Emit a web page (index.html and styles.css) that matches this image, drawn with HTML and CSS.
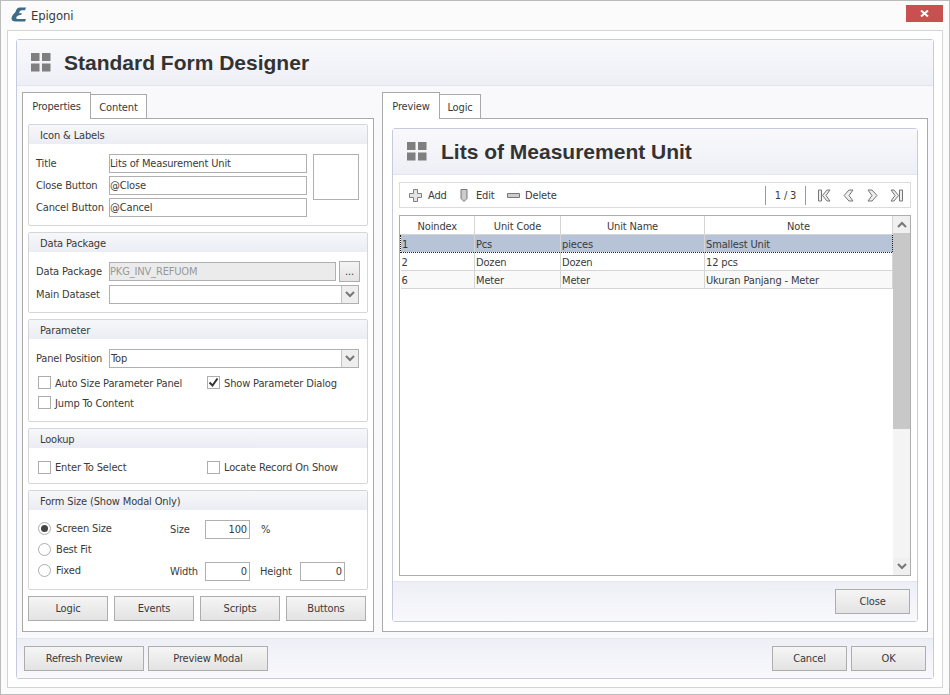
FILE: index.html
```html
<!DOCTYPE html>
<html lang="en">
<head>
  <meta charset="UTF-8">
  <title>Epigoni</title>
  <link rel="stylesheet" href="styles.css">
</head>
<body>
  <div class="window">
    <div class="titlebar">
      <svg class="logo" width="16" height="15" viewBox="0 0 16 15">
        <path d="M15 .5H9C6.500 .5 5 2.500 4.500 5 2.500 7 .5 9 .5 11.500c0 2 1.500 3 4 3H14l1-2.500H6.500C5.300 12 4.800 11 5.500 10 6.500 8.500 8 8 10 8l1-1.800H8.200C8.300 4.500 9.300 3.200 11 3.200h3z" fill="#3d6b88"/>
      </svg>
      <span class="app-name">Epigoni</span>
      <button class="win-close" type="button">
        <svg width="9" height="7" viewBox="0 0 9 7"><path d="M1 0.500L8 6.500M8 0.500L1 6.500" stroke="#fff" stroke-width="2"/></svg>
      </button>
    </div>

    <div class="frame">
      <div class="designer">
        <div class="head">
          <svg class="head-icon" width="20" height="19" viewBox="0 0 20 19"><path d="M0 0h8.500v8H0zM11 0h8.500v8H11zM0 10.500h8.500v8H0zM11 10.500h8.500v8H11z" fill="#7f7f7f"/></svg>
          <h1>Standard Form Designer</h1>
        </div>

        <div class="work">
          <div class="tabset left-tabs">
            <div class="tabs">
              <span class="tab active tab-props">Properties</span>
              <span class="tab tab-content">Content</span>
            </div>
            <div class="tab-body left-body">

              <section class="group group-icon">
                <h2>Icon &amp; Labels</h2>
                <div class="group-in icon-grid">
                  <div class="rows">
                    <div class="row"><label>Title</label><div class="field w198">Lits of Measurement Unit</div></div>
                    <div class="row"><label>Close Button</label><div class="field w198">@Close</div></div>
                    <div class="row"><label>Cancel Button</label><div class="field w198">@Cancel</div></div>
                  </div>
                  <div class="icon-box"></div>
                </div>
              </section>

              <section class="group group-data">
                <h2>Data Package</h2>
                <div class="group-in rows rows-wide">
                  <div class="row">
                    <label>Data Package</label>
                    <div class="field disabled w227">PKG_INV_REFUOM</div>
                    <button class="dots" type="button">...</button>
                  </div>
                  <div class="row">
                    <label>Main Dataset</label>
                    <div class="field combo w250"><span></span><i class="arrow"><svg width="10" height="7" viewBox="0 0 10 7"><path d="M1 1l4 4 4-4" fill="none" stroke="#777" stroke-width="2"/></svg></i></div>
                  </div>
                </div>
              </section>

              <section class="group group-param">
                <h2>Parameter</h2>
                <div class="group-in">
                  <div class="row">
                    <label>Panel Position</label>
                    <div class="field combo w250"><span>Top</span><i class="arrow"><svg width="10" height="7" viewBox="0 0 10 7"><path d="M1 1l4 4 4-4" fill="none" stroke="#777" stroke-width="2"/></svg></i></div>
                  </div>
                  <div class="checks">
                    <div class="check"><i class="box"></i>Auto Size Parameter Panel</div>
                    <div class="check"><i class="box"><svg width="11" height="11" viewBox="0 0 11 11"><path d="M1.500 5.500l3 3 5-7" fill="none" stroke="#333" stroke-width="2"/></svg></i>Show Parameter Dialog</div>
                    <div class="check"><i class="box"></i>Jump To Content</div>
                  </div>
                </div>
              </section>

              <section class="group group-lookup">
                <h2>Lookup</h2>
                <div class="group-in checks lookup-checks">
                  <div class="check"><i class="box"></i>Enter To Select</div>
                  <div class="check"><i class="box"></i>Locate Record On Show</div>
                </div>
              </section>

              <section class="group group-size">
                <h2>Form Size (Show Modal Only)</h2>
                <div class="group-in size-grid">
                  <div class="radios">
                    <div class="radio on"><i class="dot"></i>Screen Size</div>
                    <div class="radio"><i class="dot"></i>Best Fit</div>
                    <div class="radio"><i class="dot"></i>Fixed</div>
                  </div>
                  <div class="size-fields">
                    <div class="size-row">
                      <span class="size-label">Size</span>
                      <div class="field num">100</div>
                      <span class="pct">%</span>
                    </div>
                    <div class="size-row">
                      <span class="size-label">Width</span>
                      <div class="field num">0</div>
                      <span class="height-label">Height</span>
                      <div class="field num">0</div>
                    </div>
                  </div>
                </div>
              </section>

              <div class="side-buttons">
                <button class="btn" type="button">Logic</button>
                <button class="btn" type="button">Events</button>
                <button class="btn" type="button">Scripts</button>
                <button class="btn" type="button">Buttons</button>
              </div>
            </div>
          </div>

          <div class="tabset right-tabs">
            <div class="tabs">
              <span class="tab active tab-preview">Preview</span>
              <span class="tab tab-logic">Logic</span>
            </div>
            <div class="tab-body right-body">
              <div class="card">
                <div class="head card-head">
                  <svg class="head-icon" width="20" height="19" viewBox="0 0 20 19"><path d="M0 0h8.500v8H0zM11 0h8.500v8H11zM0 10.500h8.500v8H0zM11 10.500h8.500v8H11z" fill="#7f7f7f"/></svg>
                  <h1>Lits of Measurement Unit</h1>
                </div>

                <div class="card-main">
                  <div class="toolbar">
                    <span class="tool tool-add">
                      <svg width="13" height="13" viewBox="0 0 13 13"><path d="M4.500.500h4v4h4v4h-4v4h-4v-4h-4v-4h4z" fill="#e4e4e4" stroke="#808080"/></svg>Add
                    </span>
                    <span class="tool tool-edit">
                      <svg width="8" height="13" viewBox="0 0 8 13"><path d="M1 .500h6v9l-3 3-3-3z" fill="#ccc" stroke="#777"/></svg>Edit
                    </span>
                    <span class="tool tool-del">
                      <svg width="13" height="5" viewBox="0 0 13 5"><path d="M.500.500h12v4H.500z" fill="#ccc" stroke="#777"/></svg>Delete
                    </span>
                    <div class="pager">
                      <span class="pager-text">1 / 3</span>
                      <svg width="13" height="13" viewBox="0 0 13 13"><path d="M.500 1h3v11h-3zM9 1L4.500 6.500 9 12h3L8 6.500 12 1z" fill="#eee" stroke="#777"/></svg>
                      <svg width="11" height="13" viewBox="0 0 11 13"><path d="M6 1L1 6.500 6 12h4L6 6.500 10 1z" fill="#eee" stroke="#777"/></svg>
                      <svg width="12" height="13" viewBox="0 0 12 13"><path d="M2 1h4l5 5.500L6 12H2l4-5.500z" fill="#eee" stroke="#777"/></svg>
                      <svg width="13" height="13" viewBox="0 0 13 13"><path d="M12.500 1h-3v11h3zM4 1l4.500 5.500L4 12H1l4-5.500L1 1z" fill="#eee" stroke="#777"/></svg>
                    </div>
                  </div>

                  <div class="grid">
                    <table>
                      <thead>
                        <tr><th class="c1">Noindex</th><th class="c2">Unit Code</th><th class="c3">Unit Name</th><th class="c4">Note</th></tr>
                      </thead>
                      <tbody>
                        <tr class="selected"><td>1</td><td>Pcs</td><td>pieces</td><td>Smallest Unit</td></tr>
                        <tr><td>2</td><td>Dozen</td><td>Dozen</td><td>12 pcs</td></tr>
                        <tr class="alt"><td>6</td><td>Meter</td><td>Meter</td><td>Ukuran Panjang - Meter</td></tr>
                      </tbody>
                    </table>
                    <div class="scroll">
                      <span class="scroll-btn"><svg width="10" height="7" viewBox="0 0 10 7"><path d="M1 6l4-4 4 4" fill="none" stroke="#777" stroke-width="2"/></svg></span>
                      <span class="thumb"></span>
                      <span class="scroll-btn scroll-end"><svg width="10" height="7" viewBox="0 0 10 7"><path d="M1 1l4 4 4-4" fill="none" stroke="#777" stroke-width="2"/></svg></span>
                    </div>
                  </div>
                </div>

                <div class="card-foot">
                  <button class="btn btn-75" type="button">Close</button>
                </div>
              </div>
            </div>
          </div>
        </div>

        <div class="foot">
          <button class="btn btn-120" type="button">Refresh Preview</button>
          <button class="btn btn-120" type="button">Preview Modal</button>
          <span class="spacer"></span>
          <button class="btn btn-75" type="button">Cancel</button>
          <button class="btn btn-75" type="button">OK</button>
        </div>
      </div>
    </div>
  </div>
</body>
</html>
```

FILE: styles.css
```css
* {
  box-sizing: border-box;
}

body {
  margin: 0;
  font-family: "DejaVu Sans", sans-serif;
  font-stretch: condensed;
  font-size: 11px;
  letter-spacing: -0.15px;
  color: #3a3a3a;
  background-color: #fff;
}

.window {
  width: 950px;
  height: 695px;
  display: flex;
  flex-direction: column;
  border: 1px solid #bcbcbc;
  background-color: #fbfbfb;
}

.titlebar {
  height: 29px;
  flex: none;
  display: flex;
  align-items: center;
  padding: 0 6px 0 10px;
}

.logo {
  margin-top: -2px;
}

.app-name {
  margin-left: 4px;
  margin-top: -1px;
  font-size: 13px;
}

.win-close {
  margin-left: auto;
  margin-top: -5px;
  width: 37px;
  height: 17px;
  padding: 0;
  border: none;
  background-color: #c75050;
  display: flex;
  align-items: center;
  justify-content: center;
}

.frame {
  flex: 1;
  margin: 0 6px 6px;
  padding: 8px;
  border: 1px solid #d4d4d4;
  background-color: #fff;
  display: flex;
}

.designer {
  flex: 1;
  display: flex;
  flex-direction: column;
  border: 1px solid #c5cbdc;
  border-radius: 3px;
  background-color: #f9f9fc;
}

.head {
  height: 46px;
  flex: none;
  display: flex;
  align-items: center;
  padding-left: 14px;
  border-bottom: 1px solid #e3e5ee;
  background: linear-gradient(#f9f9fc, #eeeff6);
}

.head h1 {
  margin: 0 0 0 13px;
  font-family: "Liberation Sans", Arial, sans-serif;
  font-stretch: normal;
  font-size: 21px;
  letter-spacing: 0;
  font-weight: bold;
  color: #333;
}

.work {
  flex: 1;
  display: flex;
  gap: 8px;
  padding: 6px 5px 6px 5px;
  min-height: 0;
}

.tabset {
  display: flex;
  flex-direction: column;
}

.left-tabs {
  width: 352px;
}

.right-tabs {
  width: 546px;
}

.tabs {
  height: 26px;
  flex: none;
  display: flex;
  align-items: flex-end;
  position: relative;
  z-index: 1;
}

.tab {
  height: 24px;
  padding-top: 6px;
  text-align: center;
  background-color: #fff;
  border: 1px solid #a9a9a9;
  border-bottom: none;
  border-left: none;
}

.tab.active {
  height: 27px;
  margin-bottom: -1px;
  padding-top: 7px;
  border-left: 1px solid #a9a9a9;
}

.tab-props {
  width: 69px;
}

.tab-content {
  width: 56px;
}

.tab-preview {
  width: 58px;
}

.tab-logic {
  width: 41px;
}

.tab-body {
  flex: 1;
  border: 1px solid #a9a9a9;
  background-color: #fff;
}

.left-body {
  padding: 5px;
  display: flex;
  flex-direction: column;
}

.right-body {
  padding: 9px 9px 9px 9px;
  display: flex;
}

.group {
  border: 1px solid #d6d6d6;
  border-radius: 2px;
  margin-bottom: 6px;
  width: 340px;
  background-color: #fff;
}

.group h2 {
  margin: 0;
  height: 19px;
  padding: 4px 0 0 11px;
  font-size: 11px;
  font-weight: normal;
  background: linear-gradient(#f6f7fa, #ebedf4);
}

.group-icon {
  height: 102px;
}

.group-data {
  height: 81px;
}

.group-param {
  height: 103px;
}

.group-lookup {
  height: 56px;
}

.group-size {
  height: 100px;
}

.group-in {
  padding: 10px 0 0 7px;
}

.icon-grid {
  display: flex;
  gap: 6px;
}

.rows {
  display: flex;
  flex-direction: column;
  gap: 3px;
}

.rows-wide {
  gap: 4px;
}

.row {
  display: flex;
  align-items: center;
  height: 19px;
}

.row label {
  width: 73px;
  flex: none;
}

.field {
  height: 19px;
  line-height: 17px;
  padding: 0;
  border: 1px solid #b0b0b0;
  background-color: #fff;
  white-space: nowrap;
}

.w198 {
  width: 198px;
}

.w227 {
  width: 227px;
}

.w250 {
  width: 250px;
}

.disabled {
  background-color: #ebebeb;
  color: #999;
}

.combo {
  display: flex;
  justify-content: space-between;
  padding-left: 1px;
}

.arrow {
  width: 17px;
  border-left: 1px solid #c4c4c4;
  background-color: #eee;
  display: flex;
  align-items: center;
  justify-content: center;
}

.icon-box {
  width: 46px;
  height: 46px;
  border: 1px solid #b0b0b0;
}

.dots {
  width: 21px;
  height: 21px;
  margin-left: 3px;
  padding: 0 0 0 0;
  font: inherit;
  letter-spacing: inherit;
  color: inherit;
  border: 1px solid #adadad;
  background: linear-gradient(#f4f4f4, #e4e4e4);
}

.checks {
  display: grid;
  grid-template-columns: 169px 1fr;
  row-gap: 7px;
  padding: 9px 0 0 2px;
}

.lookup-checks {
  padding: 13px 0 0 9px;
}

.check {
  display: flex;
  align-items: flex-start;
  height: 13px;
  line-height: 13px;
}

.box {
  width: 13px;
  height: 13px;
  margin: -1px 4px 0 0;
  border: 1px solid #adadad;
  background-color: #fff;
  display: flex;
}

.lookup-checks .box {
  margin-top: 0;
}

.box svg {
  flex: none;
}

.size-grid {
  display: flex;
  padding: 12px 0 0 9px;
}

.radios {
  width: 132px;
  display: flex;
  flex-direction: column;
  gap: 8px;
}

.radio {
  display: flex;
  align-items: center;
  height: 13px;
}

.dot {
  width: 13px;
  height: 13px;
  margin-right: 5px;
  border: 1px solid #adadad;
  border-radius: 50%;
  background-color: #fff;
  display: flex;
  align-items: center;
  justify-content: center;
}

.radio.on .dot::after {
  content: "";
  width: 7px;
  height: 7px;
  border-radius: 50%;
  background-color: #444;
}

.size-fields {
  display: flex;
  flex-direction: column;
  gap: 23px;
  margin-top: -2px;
}

.size-row {
  display: flex;
  align-items: center;
  height: 19px;
}

.size-label {
  width: 35px;
}

.num {
  width: 45px;
  text-align: right;
  padding-right: 2px;
}

.pct {
  margin-left: 11px;
}

.height-label {
  width: 40px;
  margin-left: 10px;
}

.side-buttons {
  display: flex;
  gap: 6px;
}

.btn {
  width: 80px;
  height: 25px;
  padding: 0;
  font: inherit;
  font-stretch: condensed;
  letter-spacing: inherit;
  color: inherit;
  border: 1px solid #adadad;
  background: linear-gradient(#f5f5f5, #e3e3e3);
}

.btn-75 {
  width: 75px;
}

.btn-120 {
  width: 120px;
}

.card {
  flex: 1;
  display: flex;
  flex-direction: column;
  border: 1px solid #c5cbdc;
  border-radius: 3px;
  background-color: #fff;
}

.card-head {
  height: 46px;
}

.card-head h1 {
  margin-left: 14px;
}

.card-main {
  flex: 1;
  display: flex;
  flex-direction: column;
  padding: 7px 6px 5px 6px;
  min-height: 0;
}

.toolbar {
  height: 26px;
  flex: none;
  display: flex;
  align-items: center;
  border: 1px solid #dcdcdc;
  padding-left: 9px;
  margin-bottom: 7px;
}

.tool {
  display: flex;
  align-items: center;
}

.tool-add svg {
  margin-right: 6px;
}

.tool-add {
  width: 51px;
}

.tool-edit {
  width: 47px;
}

.tool-edit svg {
  margin-right: 8px;
}

.tool-del svg {
  margin-right: 5px;
}

.pager {
  margin-left: auto;
  margin-right: 7px;
  display: flex;
  align-items: center;
  gap: 12px;
}

.pager-text {
  width: 41px;
  height: 19px;
  line-height: 19px;
  text-align: center;
  border-left: 1px solid #999;
  border-right: 1px solid #999;
}

.grid {
  flex: 1;
  display: flex;
  border: 1px solid #adadad;
  min-height: 0;
}

table {
  width: 493px;
  height: 73px;
  flex: none;
  table-layout: fixed;
  border-collapse: collapse;
}

th, td {
  height: 18px;
  padding: 3px 1px 0;
  font-weight: normal;
  text-align: left;
  white-space: nowrap;
  border-right: 1px solid #d5d5d5;
  border-bottom: 1px solid #d5d5d5;
}

th {
  padding-top: 4px;
  text-align: center;
}

.c1 {
  width: 74px;
}

.c2 {
  width: 86px;
}

.c3 {
  width: 144px;
}

.selected td {
  background-color: #b7c3d7;
  border-top: 1px dotted #222;
  border-bottom: 1px dotted #222;
}

.selected td:first-child {
  border-left: 1px dotted #222;
}

.selected td:last-child {
  border-right: 1px dotted #222;
}

.alt td {
  background-color: #f9f9f9;
}

.scroll {
  flex: 1;
  display: flex;
  flex-direction: column;
  background-color: #f4f4f4;
}

.scroll-btn {
  height: 17px;
  flex: none;
  display: flex;
  align-items: center;
  justify-content: center;
  background-color: #f0f0f0;
}

.scroll-end {
  margin-top: auto;
}

.thumb {
  height: 196px;
  background-color: #c8c8c8;
}

.card-foot {
  height: 40px;
  flex: none;
  display: flex;
  justify-content: flex-end;
  align-items: center;
  padding-right: 7px;
  border-top: 1px solid #e3e5ee;
  background: linear-gradient(#eeeff6, #f9f9fc);
}

.foot {
  height: 40px;
  flex: none;
  display: flex;
  align-items: center;
  gap: 4px;
  padding: 0 7px 0 7px;
  border-top: 1px solid #e3e5ee;
  background: linear-gradient(#eeeff6, #f9f9fc);
}

.spacer {
  flex: 1;
}
```
